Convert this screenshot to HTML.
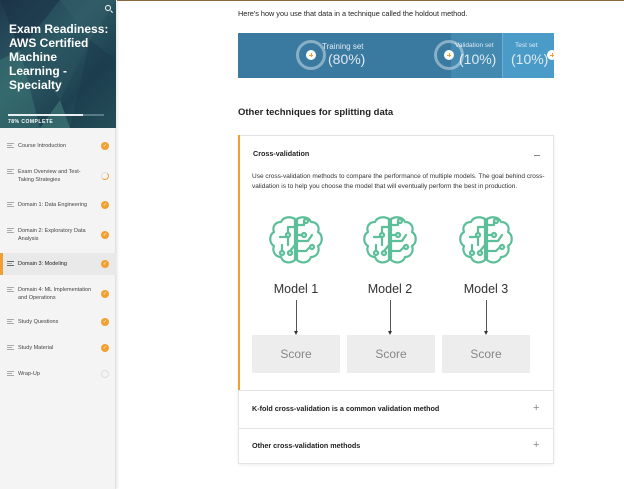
<!DOCTYPE html>
<html><head><style>
*{margin:0;padding:0;box-sizing:border-box}
body{width:624px;height:489px;overflow:hidden;background:#fff;font-family:"Liberation Sans",sans-serif;position:relative}
.sb{position:absolute;left:0;top:0;width:116px;height:489px;background:#f4f4f4;border-right:1px solid #e2e2e2;box-shadow:1px 0 3px rgba(0,0,0,.12)}
.hd{position:absolute;left:0;top:0;width:116px;height:128px;background:linear-gradient(135deg,#1f3a4e 0%,#2c5a64 40%,#1e4150 70%,#2d6466 100%);overflow:hidden}
.hd h1{position:absolute;left:9px;top:22px;color:#fff;font-size:12px;line-height:14px;font-weight:bold;white-space:nowrap}
.pb{position:absolute;left:8px;top:114px;width:96px;height:2px;background:#5a7a88}
.pb i{display:block;width:75px;height:2px;background:#e8eef0}
.hd .pc{position:absolute;left:8px;top:119px;color:#fff;font-size:5px;font-weight:bold;letter-spacing:.5px}
.it{position:absolute;left:0;width:116px;font-size:5.5px;color:#444;line-height:7.5px}
.it .ic{position:absolute;left:7px;width:7px;height:5px;border-top:1px solid #aaa;border-bottom:1px solid #aaa}
.it .ic:after{content:"";position:absolute;left:0;top:1px;width:5px;height:1px;background:#aaa}
.it .t{position:absolute;left:18px;width:78px}
.ck{position:absolute;left:101px;width:8px;height:8px;border-radius:50%;background:#f0a030;color:#fff;font-size:5px;text-align:center;line-height:8px}
.top{position:absolute;left:117px;top:0;width:507px;height:1px;background:#8a6a40}
.p{position:absolute;font-size:7px;color:#222}
.bar{position:absolute;left:238px;top:33px;width:316px;height:45px;display:flex}
.bar>div{position:relative;color:#dfeaf2;text-align:center}
.bar .plus{position:absolute;width:10px;height:10px;border-radius:50%;background:#fff;z-index:2}
.bar .plus:before{content:"";position:absolute;left:3px;top:4.5px;width:4px;height:1px;background:#f0a030}
.bar .plus:after{content:"";position:absolute;left:4.5px;top:3px;width:1px;height:4px;background:#f0a030}
.bar .ring{position:absolute;width:30px;height:30px;border-radius:50%;border:3px solid rgba(255,255,255,.4)}
.acc{position:absolute;left:238px;top:135px;width:316px;height:329px;border:1px solid #e4e4e4;box-shadow:0 1px 3px rgba(0,0,0,.08)}
.b{font-weight:bold;font-size:7.2px;color:#222;position:absolute}
.sc{position:absolute;top:335px;width:88px;height:38px;background:#ededed;color:#888;font-size:12px;text-align:center;line-height:38px}
.ml{position:absolute;top:282px;font-size:12.5px;color:#333;width:90px;text-align:center}
.ar{position:absolute;top:300px;width:1px;height:33px;background:#555}
.ar:after{content:"";position:absolute;left:-2px;bottom:-2px;border-left:2.5px solid transparent;border-right:2.5px solid transparent;border-top:4px solid #333}
.brain{position:absolute;top:215px}
</style></head><body>
<div class="sb">
<div class="hd">
<svg width="116" height="128" style="position:absolute;left:0;top:0" opacity=".5">
<polygon points="0,0 60,0 20,50" fill="#1a2f45"/><polygon points="60,0 116,0 90,40" fill="#355f6a"/><polygon points="20,50 90,40 60,100" fill="#2b5560"/><polygon points="0,60 20,50 40,128 0,128" fill="#3d7a78"/><polygon points="90,40 116,60 116,128 70,128" fill="#1c3a4c"/><polygon points="40,128 60,100 70,128" fill="#4b8a84"/></svg>
<div style="position:absolute;right:5px;top:5px;width:6px;height:6px;border:1.2px solid #fff;border-radius:50%"></div>
<div style="position:absolute;right:3px;top:11px;width:3px;height:1.2px;background:#fff;transform:rotate(45deg)"></div>
<h1>Exam Readiness:<br>AWS Certified<br>Machine<br>Learning -<br>Specialty</h1>
<div class="pb"><i></i></div><div class="pc">78% COMPLETE</div>
</div>
<div class="it" style="top:143px"><span class="ic" style="top:0"></span><span class="t">Course Introduction</span><span class="ck" style="top:-1px">✓</span></div>
<div class="it" style="top:169px"><span class="ic" style="top:0"></span><span class="t">Exam Overview and Test-Taking Strategies</span><span class="ck" style="top:3px;background:none;border:1.5px solid #f0a030;border-left-color:#ddd;border-top-color:#ddd"></span></div>
<div class="it" style="top:202px"><span class="ic" style="top:0"></span><span class="t">Domain 1: Data Engineering</span><span class="ck" style="top:-1px">✓</span></div>
<div class="it" style="top:228px"><span class="ic" style="top:0"></span><span class="t">Domain 2: Exploratory Data Analysis</span><span class="ck" style="top:3px">✓</span></div>
<div style="position:absolute;left:0;top:253px;width:116px;height:22px;background:#e9e9e9;border-left:3px solid #f0a030"></div>
<div class="it" style="top:261px"><span class="ic" style="top:0;border-color:#666"></span><span class="t" style="color:#222">Domain 3: Modeling</span><span class="ck" style="top:-1px">✓</span></div>
<div class="it" style="top:287px"><span class="ic" style="top:0"></span><span class="t">Domain 4: ML Implementation and Operations</span><span class="ck" style="top:3px">✓</span></div>
<div class="it" style="top:319px"><span class="ic" style="top:0"></span><span class="t">Study Questions</span><span class="ck" style="top:-1px">✓</span></div>
<div class="it" style="top:345px"><span class="ic" style="top:0"></span><span class="t">Study Material</span><span class="ck" style="top:-1px">✓</span></div>
<div class="it" style="top:371px"><span class="ic" style="top:0"></span><span class="t">Wrap-Up</span><span class="ck" style="top:-1px;background:none;border:1px solid #ddd"></span></div>
</div>
<div class="top"></div>
<div class="p" style="left:238px;top:9px;font-size:7.3px">Here's how you use that data in a technique called the holdout method.</div>
<div class="bar">
<div style="width:213px;background:#3a7aa0"><div style="position:absolute;left:84px;top:9px;font-size:8px">Training set</div><div style="position:absolute;left:90px;top:18px;font-size:14px">(80%)</div><div class="ring" style="left:58px;top:7px"></div><div class="plus" style="left:68px;top:17px"></div></div>
<div style="width:51px;background:#4389b0"><div style="position:absolute;left:4px;top:9px;font-size:6.5px;white-space:nowrap">Validation set</div><div style="position:absolute;left:8px;top:18px;font-size:14px">(10%)</div><div class="ring" style="left:-17px;top:7px"></div><div class="plus" style="left:-7px;top:17px"></div></div>
<div style="width:52px;background:#4b9bc8;border-left:1px solid #6cb0d8"><div style="position:absolute;left:12px;top:9px;font-size:6.5px">Test set</div><div style="position:absolute;left:8px;top:18px;font-size:14px">(10%)</div><div class="plus" style="left:44px;top:17px"></div></div>
</div>
<div class="b" style="left:238px;top:107px;font-size:9.5px">Other techniques for splitting data</div>
<div class="acc"></div>
<div style="position:absolute;left:238px;top:135px;width:2px;height:255px;background:#f0a030"></div>
<div class="b" style="left:253px;top:149px">Cross-validation</div>
<div style="position:absolute;left:534px;top:155px;width:6px;height:1px;background:#888"></div>
<div class="p" style="left:252px;top:172px;width:298px;font-size:6.5px;line-height:10px;color:#333">Use cross-validation methods to compare the performance of multiple models. The goal behind cross-validation is to help you choose the model that will eventually perform the best in production.</div>
<svg width="0" height="0" style="position:absolute"><defs><g id="br" fill="none" stroke="#5dbf9a" stroke-width="2.2" stroke-linejoin="round" stroke-linecap="round">
<path d="M27 4 C22 1 15 2 13 7 C7 7 4 12 6 17 C1 20 1 28 6 31 C4 36 7 42 13 42 C15 48 22 49 27 45 Z"/>
<path d="M29 4 C34 1 41 2 43 7 C49 7 52 12 50 17 C55 20 55 28 50 31 C52 36 49 42 43 42 C41 48 34 49 29 45 Z"/>
<path d="M27 12 L20 12 L20 18 M12 22 L20 22 L20 30 M27 30 L22 36 M14 30 L14 36"/>
<path d="M29 10 L36 10 L36 6 M29 20 L34 20 M29 26 L40 26 L44 20 M29 36 L38 36 L42 32"/>
<circle cx="20" cy="20" r="2"/><circle cx="14" cy="38" r="2"/><circle cx="38" cy="6" r="2"/><circle cx="36" cy="20" r="2"/><circle cx="44" cy="32" r="2"/><circle cx="22" cy="38" r="2"/>
</g></defs></svg>
<svg class="brain" style="left:268px" width="56" height="50"><use href="#br"/></svg>
<svg class="brain" style="left:362px" width="56" height="50"><use href="#br"/></svg>
<svg class="brain" style="left:458px" width="56" height="50"><use href="#br"/></svg>
<div class="ml" style="left:251px">Model 1</div>
<div class="ml" style="left:345px">Model 2</div>
<div class="ml" style="left:441px">Model 3</div>
<div class="ar" style="left:296px"></div><div class="ar" style="left:390px"></div><div class="ar" style="left:486px"></div>
<div class="sc" style="left:252px">Score</div><div class="sc" style="left:347px">Score</div><div class="sc" style="left:442px">Score</div>
<div style="position:absolute;left:238px;top:390px;width:316px;height:1px;background:#e4e4e4"></div>
<div class="b" style="left:252px;top:404px">K-fold cross-validation is a common validation method</div>
<div style="position:absolute;left:533px;top:402px;color:#888;font-size:11px">+</div>
<div style="position:absolute;left:238px;top:428px;width:316px;height:1px;background:#e4e4e4"></div>
<div class="b" style="left:252px;top:441px">Other cross-validation methods</div>
<div style="position:absolute;left:533px;top:439px;color:#888;font-size:11px">+</div>
</body></html>
